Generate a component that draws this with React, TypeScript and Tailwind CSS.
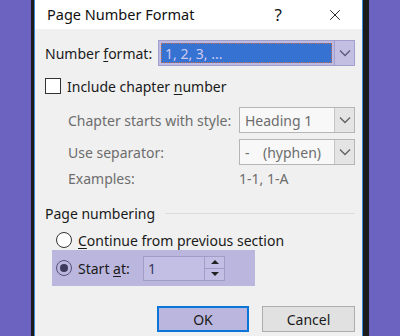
import { X } from 'lucide-react'

function Chevron({ muted }: { muted?: boolean }) {
  return (
    <svg width="12" height="8" viewBox="0 0 12 8" fill="none">
      <path d="M1 1.5 L6 6.5 L11 1.5" stroke={muted ? '#606060' : '#5a5a78'} strokeWidth="1.3" />
    </svg>
  )
}

export default function App() {
  const font = { fontFamily: '"Noto Sans", "Open Sans", sans-serif' }

  return (
    <div className="flex h-[336px] w-[400px] overflow-hidden bg-[#6c63c1]" style={font}>
      <div className="w-[31px] shrink-0" />
      <div className="flex w-[338px] shrink-0 border-l-[3px] border-r-[6px] border-[#1b1b1b]">
        <div className="flex w-full flex-col border-x border-[#3b8ad6] bg-[#f0f0f0] text-[14px] text-[#1a1a1a]">
          {/* Title bar */}
          <div className="flex h-[29px] shrink-0 items-center bg-white pl-[12px] pr-[18px] text-[14.5px] text-[#111]">
            <span className="flex-1">Page Number Format</span>
            <span className="mr-[44px] text-[17px]">?</span>
            <X className="h-[18px] w-[18px]" strokeWidth={1.2} />
          </div>

          <div className="flex flex-col pl-[10px] pr-[7px]">
            {/* Number format */}
            <div className="mt-[11px] flex h-[26px] items-center">
              <span className="w-[113px]">
                Number <span className="underline underline-offset-2">f</span>ormat:
              </span>
              <div className="flex h-[26px] flex-1 items-stretch border border-[#a39fcf] bg-[#bdb9e1]">
                <div className="m-[2px] flex flex-1 items-center border border-dotted border-[#c0704a] bg-[#3572d2] pl-[3px] text-[#cfcaf2]">
                  1, 2, 3, ...
                </div>
                <div className="flex w-[20px] items-center justify-center border-l border-[#a39fcf] bg-[#c3bfe3]">
                  <Chevron />
                </div>
              </div>
            </div>

            {/* Include chapter number */}
            <div className="mt-[12px] flex h-[16px] items-center">
              <div className="mr-[6px] h-[16px] w-[16px] border border-[#333] bg-white" />
              <span>
                Include chapter <span className="underline underline-offset-2">n</span>umber
              </span>
            </div>

            {/* Chapter starts with style */}
            <div className="mt-[13px] flex h-[26px] items-center pl-[23px] text-[#6d6d6d]">
              <span className="w-[171px]">Chapter starts with style:</span>
              <div className="flex h-[26px] flex-1 items-stretch border border-[#b5b5b5] bg-[#f8f8f8]">
                <div className="flex flex-1 items-center pl-[5px]">Heading 1</div>
                <div className="flex w-[20px] items-center justify-center border-l border-[#c5c5c5] bg-[#e4e4e4]">
                  <Chevron muted />
                </div>
              </div>
            </div>

            {/* Use separator */}
            <div className="mt-[6px] flex h-[26px] items-center pl-[23px] text-[#6d6d6d]">
              <span className="w-[171px]">Use separator:</span>
              <div className="flex h-[26px] flex-1 items-stretch border border-[#b5b5b5] bg-[#f8f8f8]">
                <div className="flex flex-1 items-center pl-[5px]">
                  <span className="w-[18px]">-</span>(hyphen)
                </div>
                <div className="flex w-[20px] items-center justify-center border-l border-[#c5c5c5] bg-[#e4e4e4]">
                  <Chevron muted />
                </div>
              </div>
            </div>

            {/* Examples */}
            <div className="mt-[2px] flex h-[22px] items-center pl-[23px] text-[#6d6d6d]">
              <span className="w-[171px]">Examples:</span>
              <span>1-1, 1-A</span>
            </div>

            {/* Page numbering */}
            <div className="mt-[14px] flex h-[20px] items-center">
              <span className="mr-[10px]">Page numbering</span>
              <div className="h-px flex-1 bg-[#dcdcdc]" />
            </div>

            {/* Continue */}
            <div className="mt-[7px] flex h-[20px] items-center pl-[11px]">
              <div className="mr-[6px] h-[16px] w-[16px] rounded-full border border-[#333] bg-white" />
              <span>
                <span className="underline underline-offset-2">C</span>ontinue from previous section
              </span>
            </div>

            {/* Start at */}
            <div className="ml-[7px] flex h-[36px] w-[203px] items-center bg-[#bab6dd] pl-[4px]">
              <div className="mr-[6px] flex h-[16px] w-[16px] items-center justify-center rounded-full border border-[#55527a]">
                <div className="h-[8px] w-[8px] rounded-full bg-[#3d3a5e]" />
              </div>
              <span className="w-[65px]">
                Start <span className="underline underline-offset-2">a</span>t:
              </span>
              <div className="flex h-[25px] w-[82px] items-stretch border border-[#a19dc9] bg-[#c3bfe4]">
                <div className="flex flex-1 items-center pl-[4px] text-[#3a3560]">1</div>
                <div className="flex w-[20px] flex-col border-l border-[#a19dc9]">
                  <div className="flex flex-1 items-center justify-center border-b border-[#a19dc9]">
                    <div className="h-0 w-0 border-x-[4px] border-b-[4px] border-x-transparent border-b-[#222]" />
                  </div>
                  <div className="flex flex-1 items-center justify-center">
                    <div className="h-0 w-0 border-x-[4px] border-t-[4px] border-x-transparent border-t-[#222]" />
                  </div>
                </div>
              </div>
            </div>

            {/* Buttons */}
            <div className="mt-[20px] flex justify-end gap-[13px]">
              <button className="h-[26px] w-[92px] border-2 border-[#0a74d8] bg-[#bab6dd] text-[#1a1a1a]">OK</button>
              <button className="h-[26px] w-[93px] border border-[#adadad] bg-[#e1e1e1] text-[#1a1a1a]">Cancel</button>
            </div>
          </div>
        </div>
      </div>
      <div className="flex-1" />
    </div>
  )
}
